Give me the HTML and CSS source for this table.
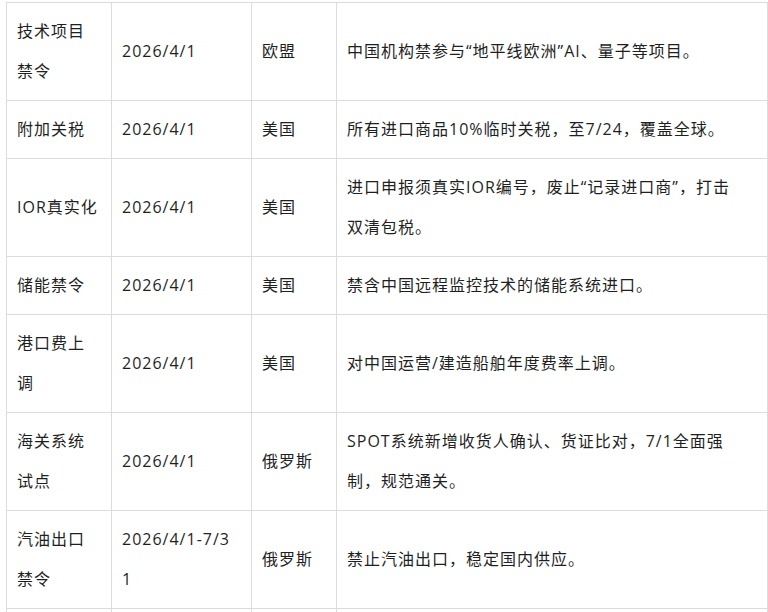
FILE: index.html
```html
<!DOCTYPE html>
<html lang="zh-CN">
<head>
  <meta charset="UTF-8" />
  <meta name="viewport" content="width=device-width, initial-scale=1.0" />
  <title>各国贸易新规一览</title>
  <link rel="stylesheet" href="styles.css">
</head>
<body>
  <table class="policy-table">
    <colgroup>
      <col class="col-name">
      <col class="col-date">
      <col class="col-region">
      <col class="col-desc">
    </colgroup>
    <tbody>
      <tr>
        <td>技术项目禁令</td>
        <td>2026/4/1</td>
        <td>欧盟</td>
        <td>中国机构禁参与“地平线欧洲”AI、量子等项目。</td>
      </tr>
      <tr>
        <td>附加关税</td>
        <td>2026/4/1</td>
        <td>美国</td>
        <td>所有进口商品10%临时关税，至7/24，覆盖全球。</td>
      </tr>
      <tr>
        <td>IOR真实化</td>
        <td>2026/4/1</td>
        <td>美国</td>
        <td>进口申报须真实IOR编号，废止“记录进口商”，打击双清包税。</td>
      </tr>
      <tr>
        <td>储能禁令</td>
        <td>2026/4/1</td>
        <td>美国</td>
        <td>禁含中国远程监控技术的储能系统进口。</td>
      </tr>
      <tr>
        <td>港口费上调</td>
        <td>2026/4/1</td>
        <td>美国</td>
        <td>对中国运营/建造船舶年度费率上调。</td>
      </tr>
      <tr>
        <td>海关系统试点</td>
        <td>2026/4/1</td>
        <td>俄罗斯</td>
        <td>SPOT系统新增收货人确认、货证比对，7/1全面强制，规范通关。</td>
      </tr>
      <tr>
        <td>汽油出口禁令</td>
        <td>2026/4/1-7/31</td>
        <td>俄罗斯</td>
        <td>禁止汽油出口，稳定国内供应。</td>
      </tr>
      <tr>
        <td>&nbsp;</td>
        <td>&nbsp;</td>
        <td>&nbsp;</td>
        <td>&nbsp;</td>
      </tr>
    </tbody>
  </table>
</body>
</html>
```

FILE: styles.css
```css
* {
  margin: 0;
  padding: 0;
  box-sizing: border-box;
}

body {
  background: #fff;
  font-family: "Open Sans", "Noto Sans CJK SC", sans-serif;
  color: #1f1f1f;
  padding: 2px 0 0 6px;
}

.policy-table {
  width: 761px;
  table-layout: fixed;
  border-collapse: collapse;
  font-size: 16px;
  letter-spacing: 1px;
}

.col-name { width: 105px; }
.col-date { width: 140px; }
.col-region { width: 85px; }
.col-desc { width: 431px; }

.policy-table td {
  border: 1px solid #dcdcdc;
  padding: 8px 12px 9px 10px;
  line-height: 40px;
  vertical-align: middle;
  word-break: break-all;
}

.policy-table td:last-child {
  padding-right: 30px;
}
```
